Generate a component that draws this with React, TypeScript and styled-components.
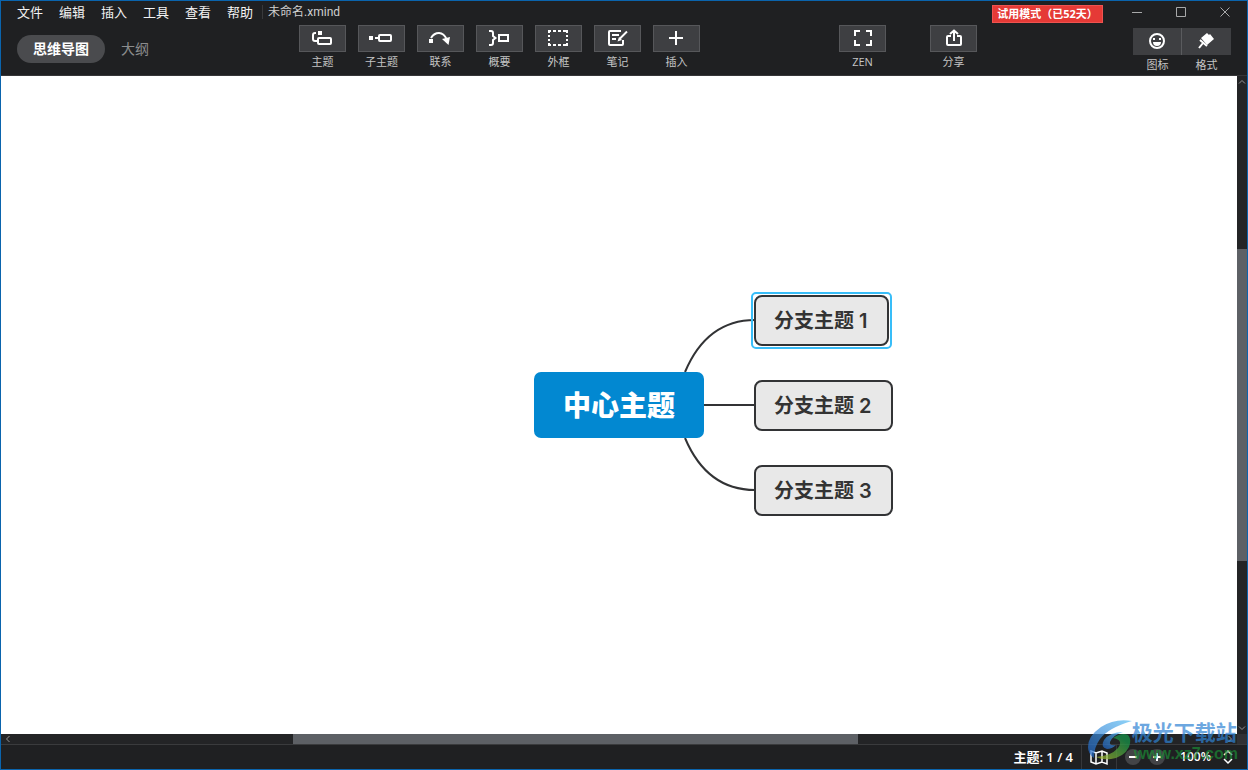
import React from "react";
import styled, { createGlobalStyle } from "styled-components";

const GlobalStyle = createGlobalStyle`
  *, *::before, *::after { box-sizing: border-box; }
  body {
    margin: 0;
    font-family: "Open Sans", "Noto Sans CJK SC", sans-serif;
    background: #1f2022;
  }
  button { font: inherit; color: inherit; border: 0; padding: 0; background: none; }
`;

const Window = styled.div`
  display: flex;
  flex-direction: column;
  position: relative;
  min-height: 100vh;
  border: 1px solid #0a64ad;
  background: #1f2022;
  color: #fff;
`;

const Header = styled.header`
  border-bottom: 1px solid #363638;
`;

const TitleBar = styled.div`
  display: flex;
  align-items: flex-start;
  height: 24px;
  padding-left: 16px;
`;

const Menu = styled.nav`
  display: flex;
  gap: 16px;
  font-size: 13px;
  line-height: 22px;
  color: #f2f2f2;
`;

const FileName = styled.span`
  margin: 4px 0 0 9px;
  padding-left: 5px;
  border-left: 1px solid #38393b;
  font-family: Roboto, "Noto Sans CJK SC", sans-serif;
  font-size: 12px;
  line-height: 14px;
  color: #d0d0d0;
`;

const Trial = styled.button`
  height: 18px;
  width: 111px;
  margin: 4px 12px 0 auto;
  border: 1px solid #ee5350;
  background: #e53a36;
  font-size: 11px;
  line-height: 16px;
  font-weight: 700;
  white-space: nowrap;
`;

const WindowButton = styled.button`
  display: flex;
  align-items: center;
  justify-content: center;
  width: 44px;
  height: 22px;
`;

const Toolbar = styled.div`
  display: flex;
  align-items: flex-start;
  height: 50px;
  padding-right: 16px;
`;

const Tabs = styled.div`
  display: flex;
  align-items: center;
  flex: none;
  width: 298px;
  padding: 10px 0 0 16px;
`;

const Tab = styled.button<{ $active?: boolean }>`
  height: 28px;
  padding: 0 16px;
  border-radius: 14px;
  font-size: 14px;
  line-height: 28px;
  font-weight: ${(p) => (p.$active ? 700 : 400)};
  color: ${(p) => (p.$active ? "#fff" : "#8b8c8d")};
  background: ${(p) => (p.$active ? "#4a4b4e" : "transparent")};
`;

const ToolGroup = styled.div<{ $gap: number }>`
  display: flex;
  gap: ${(p) => p.$gap}px;
`;

const ViewTools = styled(ToolGroup)`
  margin: 0 156px 0 auto;
`;

const Tool = styled.button`
  display: flex;
  flex-direction: column;
  align-items: center;
  width: 47px;
`;

const ToolIcon = styled.span`
  display: flex;
  align-items: center;
  justify-content: center;
  width: 100%;
  height: 27px;
  border: 1px solid #56575a;
  background: #3e3f42;
`;

const ToolLabel = styled.span`
  margin-top: 2px;
  font-size: 11px;
  line-height: 16px;
  color: #c4c4c4;
  white-space: nowrap;
`;

const Panels = styled.div`
  display: flex;
  padding-top: 3px;
`;

const PanelTool = styled(Tool)`
  width: 49px;
  ${ToolIcon} { border: 0; }
  & + & ${ToolIcon} { box-shadow: -1px 0 #5a5b5e; }
`;

const Workspace = styled.main`
  flex: 1;
  display: grid;
  grid-template-columns: minmax(0, 1fr) 10px;
  grid-template-rows: minmax(500px, 1fr) 10px;
`;

const Canvas = styled.div`
  position: relative;
  overflow: hidden;
  background: #fff;
`;

const Track = styled.div<{ $vertical?: boolean }>`
  display: flex;
  flex-direction: ${(p) => (p.$vertical ? "column" : "row")};
  align-items: stretch;
  background: #232426;
`;

const ScrollArrow = styled.button`
  display: flex;
  align-items: center;
  justify-content: center;
  flex: 0 0 14px;
`;

const Gap = styled.span<{ $grow: number }>`
  flex: ${(p) => p.$grow} 0 0;
`;

const Thumb = styled(Gap)`
  background: #5d6065;
`;

const Corner = styled.div`
  background: #303134;
`;

const Map = styled.div`
  position: absolute;
  left: 50%;
  top: 50%;
`;

const Links = styled.svg`
  position: absolute;
  left: 0;
  top: -100px;
`;

const CentralTopic = styled.div`
  position: absolute;
  left: -85px;
  top: -33px;
  width: 170px;
  height: 66px;
  border-radius: 7px;
  background: #0288d1;
  font-size: 28px;
  line-height: 66px;
  font-weight: 900;
  text-align: center;
`;

const Topic = styled.div<{ $x: number; $y: number; $selected?: boolean }>`
  position: absolute;
  left: ${(p) => p.$x}px;
  top: ${(p) => p.$y}px;
  height: 51px;
  padding: 0 19px 0 18px;
  border: 2px solid #323335;
  border-radius: 8px;
  background: #e8e8e8;
  color: #333;
  font-family: Inter, "Noto Sans CJK SC", sans-serif;
  font-size: 20px;
  line-height: 49px;
  font-weight: 600;
  white-space: nowrap;
  ${(p) => p.$selected && `
    &::after {
      content: "";
      position: absolute;
      inset: -5px;
      border: 2px solid #38bdf8;
      border-radius: 5px;
    }
  `}
`;

const StatusBar = styled.footer`
  display: flex;
  justify-content: flex-end;
  align-items: center;
  height: 25px;
  border-top: 1px solid #3a3b3d;
  font-size: 13px;
  line-height: 20px;
  font-weight: 600;
`;

const Count = styled.span`
  padding-right: 8px;
`;

const MapButton = styled.button`
  display: flex;
  align-items: center;
  justify-content: center;
  width: 36px;
  height: 24px;
  border: solid #36373a;
  border-width: 0 1px;
`;

const Zoom = styled.div`
  display: flex;
  align-items: center;
  gap: 8px;
  padding: 0 14px 0 8px;
`;

const RoundButton = styled.button`
  display: flex;
  align-items: center;
  justify-content: center;
  width: 16px;
  height: 16px;
  border-radius: 50%;
  background: #434447;
`;

const ZoomLevel = styled.button`
  display: flex;
  align-items: center;
  gap: 12px;
  margin-left: 7px;
  font-size: 12px;
`;

const Watermark = styled.div`
  position: absolute;
  right: 9px;
  bottom: 5px;
  display: flex;
  align-items: flex-start;
  opacity: 0.7;
  pointer-events: none;
`;

const WatermarkText = styled.div`
  display: flex;
  flex-direction: column;
  font-weight: 700;
  white-space: nowrap;
`;

const SiteName = styled.span`
  font-size: 21px;
  line-height: 24px;
  color: #2f83d4;
`;

const SiteUrl = styled.span`
  font-family: "Liberation Sans", sans-serif;
  font-size: 16px;
  line-height: 20px;
  color: #1c8a35;
  padding-left: 2px;
`;

const Stroke = ({ w = 21, h = 17, x = 1, y = 1, children }: { w?: number; h?: number; x?: number; y?: number; children: React.ReactNode }) => (
  <svg width={w} height={h} viewBox={`${x} ${y} ${w} ${h}`} overflow="visible" fill="none" stroke="#fff" strokeWidth="2" aria-hidden="true">
    {children}
  </svg>
);

const icons = {
  topic: (
    <Stroke>
      <path d="M5 4H4Q2 4 2 6V10Q2 12 4 12H6" />
      <path d="M7 2h4v4H7z" fill="#fff" stroke="none" />
      <rect x="7" y="9" width="13" height="6" rx="1" />
    </Stroke>
  ),
  subtopic: (
    <Stroke>
      <path d="M-1 7h4v4H-1z" fill="#fff" stroke="none" />
      <path d="M5 9h4" />
      <rect x="9" y="6" width="12" height="6" rx="1" />
    </Stroke>
  ),
  relation: (
    <Stroke>
      <path d="M0 10h4v4H0z" fill="#fff" stroke="none" />
      <path d="M2 9Q5 4 10 4Q15 4 18 11" />
      <path d="M13 10L21 8L19.500 16z" fill="#fff" stroke="none" />
    </Stroke>
  ),
  summary: (
    <Stroke>
      <path d="M1 2H3Q5 2 5 4V7L7.500 9L5 11V14Q5 16 3 16H1" />
      <rect x="11" y="6" width="9" height="6" />
    </Stroke>
  ),
  boundary: (
    <Stroke>
      <path d="M2 4V2H4M6 2h3M11 2h3M16 2h4V4M20 6v2M20 10v2M20 14v2h-4M14 16h-3M9 16H6M4 16H2v-2M2 12v-2M2 8V6" />
    </Stroke>
  ),
  note: (
    <Stroke>
      <path d="M15 2H4Q3 2 3 3V15Q3 16 4 16H16Q17 16 17 15V11M6 6h7M6 10h4" />
      <path d="M21 2.500L13.500 10" />
      <path d="M13 8l3 3l-4.500 1.500z" fill="#fff" stroke="none" />
    </Stroke>
  ),
  insert: (
    <Stroke>
      <path d="M11 2V16M4 9H18" />
    </Stroke>
  ),
  zen: (
    <Stroke>
      <path d="M4 7V2H9M15 2h5V7M20 11v5h-5M9 16H4V11" />
    </Stroke>
  ),
  share: (
    <Stroke>
      <path d="M9 7H6Q5 7 5 8V15Q5 16 6 16H18Q19 16 19 15V8Q19 7 18 7H15M12 12V2M8 5L12 1.500L16 5" />
    </Stroke>
  ),
  face: (
    <Stroke>
      <circle cx="11" cy="9" r="7" />
      <path d="M7 6h2v2H7zM13 6h2v2h-2zM7 10h8Q15 14 11 14Q7 14 7 10z" fill="#fff" stroke="none" />
    </Stroke>
  ),
  brush: (
    <Stroke>
      <path d="M12 1L14 3L15 2L19 7L12 13L6 6z" fill="#fff" stroke="none" />
      <path d="M5 8L12 14M8 11L4 16" />
    </Stroke>
  ),
};

const Chevron = ({ d }: { d: string }) => (
  <svg width="8" height="8" viewBox="0 0 8 8" fill="none" stroke="#929395" aria-hidden="true">
    <path d={d} />
  </svg>
);

const menus = ["文件", "编辑", "插入", "工具", "查看", "帮助"];

const editTools = [
  { label: "主题", icon: icons.topic },
  { label: "子主题", icon: icons.subtopic },
  { label: "联系", icon: icons.relation },
  { label: "概要", icon: icons.summary },
  { label: "外框", icon: icons.boundary },
  { label: "笔记", icon: icons.note },
  { label: "插入", icon: icons.insert },
];

const viewTools = [
  { label: "ZEN", icon: icons.zen },
  { label: "分享", icon: icons.share },
];

const panelTools = [
  { label: "图标", icon: icons.face },
  { label: "格式", icon: icons.brush },
];

const topics = [
  { label: "分支主题 1", y: -110, selected: true },
  { label: "分支主题 2", y: -25 },
  { label: "分支主题 3", y: 60 },
];

export default function App() {
  return (
    <>
      <GlobalStyle />
      <Window>
        <Header>
          <TitleBar>
            <Menu>
              {menus.map((m) => <button key={m}>{m}</button>)}
            </Menu>
            <FileName>未命名.xmind</FileName>
            <Trial>试用模式（已52天）</Trial>
            <WindowButton aria-label="最小化">
              <svg width="10" height="10" stroke="#a8a9aa"><path d="M0 5.500H10" /></svg>
            </WindowButton>
            <WindowButton aria-label="最大化">
              <svg width="10" height="10" stroke="#a8a9aa" fill="none"><path d="M.5.5h9v9h-9z" /></svg>
            </WindowButton>
            <WindowButton aria-label="关闭">
              <svg width="10" height="10" stroke="#a8a9aa"><path d="M.5.5l9 9M9.500.5l-9 9" /></svg>
            </WindowButton>
          </TitleBar>
          <Toolbar>
            <Tabs>
              <Tab $active>思维导图</Tab>
              <Tab>大纲</Tab>
            </Tabs>
            <ToolGroup $gap={12}>
              {editTools.map((t) => (
                <Tool key={t.label}>
                  <ToolIcon>{t.icon}</ToolIcon>
                  <ToolLabel>{t.label}</ToolLabel>
                </Tool>
              ))}
            </ToolGroup>
            <ViewTools $gap={44}>
              {viewTools.map((t) => (
                <Tool key={t.label}>
                  <ToolIcon>{t.icon}</ToolIcon>
                  <ToolLabel>{t.label}</ToolLabel>
                </Tool>
              ))}
            </ViewTools>
            <Panels>
              {panelTools.map((t) => (
                <PanelTool key={t.label}>
                  <ToolIcon>{t.icon}</ToolIcon>
                  <ToolLabel>{t.label}</ToolLabel>
                </PanelTool>
              ))}
            </Panels>
          </Toolbar>
        </Header>
        <Workspace>
          <Canvas>
            <Map>
              <Links width="140" height="200" viewBox="0 -100 140 200" fill="none" stroke="#323335" strokeWidth="2">
                <path d="M66 -33Q88 -85 136 -85M85 0H136M66 33Q88 85 136 85" />
              </Links>
              <CentralTopic>中心主题</CentralTopic>
              {topics.map((t) => (
                <Topic key={t.label} $x={135} $y={t.y} $selected={t.selected}>{t.label}</Topic>
              ))}
            </Map>
          </Canvas>
          <Track $vertical>
            <ScrollArrow aria-label="向上"><Chevron d="M1 4.500L4 1.500L7 4.500" /></ScrollArrow>
            <Gap $grow={159} />
            <Thumb $grow={312} />
            <Gap $grow={159} />
            <ScrollArrow aria-label="向下"><Chevron d="M1 3.500L4 6.500L7 3.500" /></ScrollArrow>
          </Track>
          <Track>
            <ScrollArrow aria-label="向左"><Chevron d="M5.500 1L2.500 4L5.500 7" /></ScrollArrow>
            <Gap $grow={278} />
            <Thumb $grow={565} />
            <Gap $grow={365} />
            <ScrollArrow aria-label="向右"><Chevron d="M2.500 1L5.500 4L2.500 7" /></ScrollArrow>
          </Track>
          <Corner />
        </Workspace>
        <StatusBar>
          <Count>主题: 1 / 4</Count>
          <MapButton aria-label="导航图">
            <Stroke w={18} h={16} x={0} y={0}>
              <path d="M1 2L6 4L12 2L17 4V15L12 13L6 15L1 13zM6 4V15M12 2V13" strokeWidth="1.500" />
            </Stroke>
          </MapButton>
          <Zoom>
            <RoundButton aria-label="缩小"><Stroke w={8} h={8} x={0} y={0}><path d="M0 4H8" /></Stroke></RoundButton>
            <RoundButton aria-label="放大"><Stroke w={8} h={8} x={0} y={0}><path d="M0 4H8M4 0V8" /></Stroke></RoundButton>
            <ZoomLevel>
              100%
              <Stroke w={10} h={14} x={0} y={0}><path d="M1 5L5 1L9 5M1 9L5 13L9 9" strokeWidth="1.500" /></Stroke>
            </ZoomLevel>
          </Zoom>
        </StatusBar>
        <Watermark>
          <svg width="44" height="40" viewBox="0 0 44 40" aria-hidden="true">
            <defs>
              <linearGradient id="swirl" x1="1" y1="0" x2="0" y2="1">
                <stop offset="0" stopColor="#5cc0f5" />
                <stop offset="1" stopColor="#1f62c4" />
              </linearGradient>
              <linearGradient id="leaf" x1="1" y1="0" x2="0" y2="1">
                <stop offset="0.200" stopColor="#15994a" />
                <stop offset="1" stopColor="#b0bc2c" />
              </linearGradient>
            </defs>
            <path d="M44 1Q27-2 13 7Q0 16 0 27Q0 34 6 38Q6 27 12 19Q20 8 44 1z" fill="url(#swirl)" />
            <path d="M35 12Q22 12 16 20Q12 27 19 29Q24 29 28 25Q21 26 22 22Q25 15 35 12z" fill="url(#swirl)" />
            <path d="M25 18Q34 12 40 15Q44 19 41 27Q36 37 23 39Q14 40 8 37Q23 36 30 28Q36 20 25 18z" fill="url(#leaf)" />
          </svg>
          <WatermarkText>
            <SiteName>极光下载站</SiteName>
            <SiteUrl>www.xz7.com</SiteUrl>
          </WatermarkText>
        </Watermark>
      </Window>
    </>
  );
}
